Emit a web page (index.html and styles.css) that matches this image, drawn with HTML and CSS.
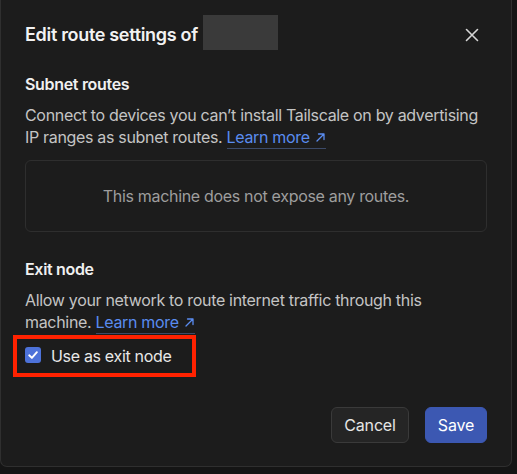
FILE: index.html
```html
<!DOCTYPE html>
<html lang="en">
<head>
<meta charset="utf-8">
<title>Edit route settings</title>
<link rel="stylesheet" href="styles.css">
</head>
<body>
<div class="dialog">
  <div class="header">
    <h2 class="title"><span>Edit route settings of</span><span class="redacted"></span></h2>
    <button class="close" aria-label="Close">
      <svg width="14" height="14" viewBox="0 0 14 14"><path d="M1.5 1.5 L12.5 12.5 M12.5 1.5 L1.5 12.5" stroke="#d6d6d6" stroke-width="1.6" stroke-linecap="round" fill="none"/></svg>
    </button>
  </div>

  <section class="section">
    <h3 class="heading">Subnet routes</h3>
    <p class="desc">Connect to devices you can’t install Tailscale on by advertising IP ranges as subnet routes. <a class="link" href="#">Learn more <svg class="arrow" width="11" height="11" viewBox="0 0 11 11"><path d="M2 9 L9 2 M3.5 2 H9 V7.5" stroke="#5a8cf0" stroke-width="1.3" fill="none" stroke-linecap="round" stroke-linejoin="round"/></svg></a></p>
    <div class="empty">This machine does not expose any routes.</div>
  </section>

  <section class="section exit">
    <h3 class="heading">Exit node</h3>
    <p class="desc">Allow your network to route internet traffic through this machine. <a class="link" href="#">Learn more <svg class="arrow" width="11" height="11" viewBox="0 0 11 11"><path d="M2 9 L9 2 M3.5 2 H9 V7.5" stroke="#5a8cf0" stroke-width="1.3" fill="none" stroke-linecap="round" stroke-linejoin="round"/></svg></a></p>
    <label class="check-row">
      <span class="checkbox">
        <svg width="16" height="16" viewBox="0 0 16 16"><path d="M4.2 8.3 L6.9 10.9 L11.9 5.2" stroke="#ffffff" stroke-width="1.9" stroke-linecap="round" stroke-linejoin="round" fill="none"/></svg>
      </span>
      <span class="check-label">Use as exit node</span>
    </label>
  </section>

  <div class="footer">
    <button class="btn btn-cancel">Cancel</button>
    <button class="btn btn-save">Save</button>
  </div>
</div>
</body>
</html>
```

FILE: styles.css
```css
* { box-sizing: border-box; }
html, body {
  margin: 0;
  padding: 0;
  background: #151515;
  font-family: Inter, "Noto Sans", sans-serif;
  color: #e8e8e8;
  letter-spacing: -0.02em;
  overflow: hidden;
}
.dialog {
  width: 512px;
  background: #1c1c1c;
  border: 1px solid #2f2f2f;
  border-top: none;
  border-radius: 0 0 7px 7px;
  padding: 0 24px 23px 24px;
}
.header {
  display: flex;
  align-items: center;
  justify-content: space-between;
  padding-top: 16px;
  height: 51px;
}
.title {
  margin: 0;
  display: flex;
  align-items: center;
  font-size: 18px;
  font-weight: 600;
  line-height: 28px;
  color: #f2f2f2;
  position: relative;
  top: 1px;
}
.redacted {
  display: inline-block;
  width: 75px;
  height: 35px;
  background: #3a3a3a;
  margin-left: 5px;
  margin-top: -2px;
  margin-bottom: 2px;
}
.close {
  background: none;
  border: none;
  padding: 0;
  width: 14px;
  height: 14px;
  margin-right: 8px;
  margin-top: 3px;
  display: flex;
}
.section { margin-top: 21px; }
.heading {
  margin: 0;
  font-size: 16px;
  font-weight: 600;
  line-height: 24px;
  color: #f0f0f0;
}
.desc {
  margin: 8px 0 0 0;
  font-size: 16px;
  line-height: 22px;
  color: #c4c4c4;
}
.link {
  color: #5a8cf0;
  text-decoration: none;
  border-bottom: 1px solid #3c4a68;
  padding-bottom: 1px;
}
.arrow { vertical-align: 0; margin-left: 1px; }
.empty {
  margin-top: 12px;
  height: 72px;
  border: 1px solid #2e2e2e;
  border-radius: 6px;
  display: flex;
  align-items: center;
  justify-content: center;
  font-size: 16px;
  color: #9e9e9e;
}
.exit { margin-top: 25px; }
.check-row {
  display: flex;
  align-items: center;
  gap: 10px;
  margin-top: 2px;
  margin-left: -12px;
  width: 183px;
  height: 42px;
  border: 4px solid #ff2200;
  padding-left: 8px;
}
.checkbox {
  width: 16px;
  height: 16px;
  border-radius: 3px;
  background: #4d72d9;
  display: flex;
  margin-top: -2px;
}
.check-label {
  font-size: 16px;
  color: #e8e8e8;
}
.footer {
  display: flex;
  justify-content: flex-end;
  gap: 16px;
  margin-top: 30px;
}
.btn {
  height: 36px;
  border-radius: 6px;
  font-family: Inter, "Noto Sans", sans-serif;
  font-size: 16px;
  letter-spacing: -0.01em;
  padding: 0 10px;
}
.btn-cancel {
  background: #252525;
  border: 1px solid #3a3a3a;
  color: #e6e6e6;
  width: 78px;
}
.btn-save {
  background: #3c58b2;
  border: 1px solid #3c58b2;
  color: #ffffff;
  width: 62px;
}
```
